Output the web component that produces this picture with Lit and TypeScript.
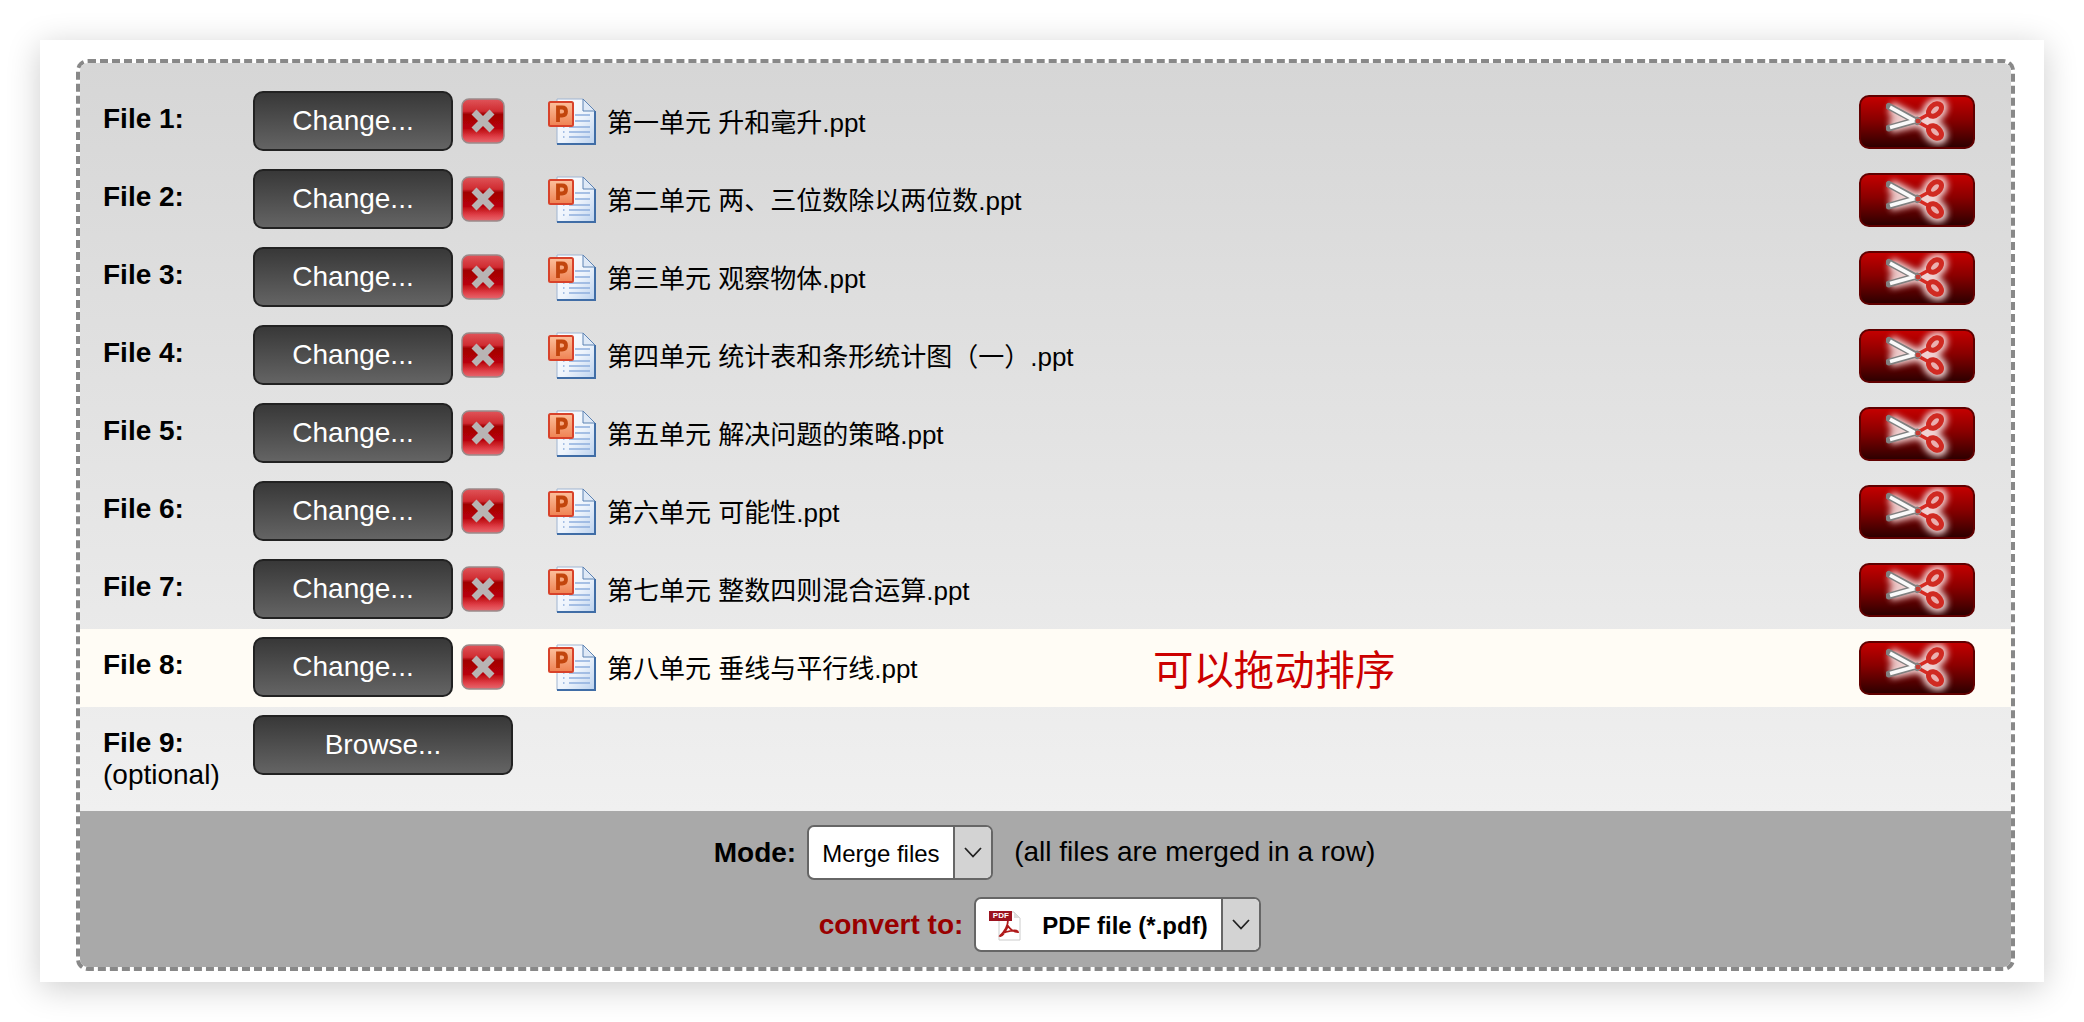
import { LitElement, html, css, svg } from "lit";
import { customElement } from "lit/decorators.js";

const pptIcon = () => svg`<svg class="ppt" width="48" height="47" viewBox="0 0 48 47">
  <defs>
    <linearGradient id="pg" x1="0" y1="0" x2="1" y2="1"><stop offset="0" stop-color="#fdfeff"/><stop offset=".55" stop-color="#eef4fc"/><stop offset="1" stop-color="#bcd2ee"/></linearGradient>
    <linearGradient id="po" x1="0" y1="0" x2="0" y2="1"><stop offset="0" stop-color="#fcc09c"/><stop offset="1" stop-color="#ef8252"/></linearGradient>
    <filter id="ps" x="-5%" y="-5%" width="110%" height="110%"><feGaussianBlur stdDeviation=".5"/></filter>
  </defs>
  <g filter="url(#ps)">
    <path d="M9 1H35L47 13V46H9Z" fill="url(#pg)" stroke="#9fb4d0" stroke-width="1"/>
    <path d="M47 13V46H9" fill="none" stroke="#3f6da6" stroke-width="2"/>
    <path d="M35 1V13H47Z" fill="#dfe9f6" stroke="#5d83b3" stroke-width="1"/>
    <g stroke="#8eaedd" stroke-width="1.4">
      <path d="M27 17H42M27 23H42"/><path d="M21 29H42M21 34H42M21 39H42"/>
      <path d="M15 29H18M15 34H18M15 39H18" stroke-dasharray="1.5 1.5"/>
    </g>
    <rect x="1" y="4" width="24" height="24" rx="1.5" fill="url(#po)" stroke="#d8432a" stroke-width="2"/>
    <path d="M10 24V9.500H14Q18 9.500 18 13.500T14 17.500H10" fill="none" stroke="#c2440c" stroke-width="3.800"/>
  </g>
</svg>`;

const xIcon = () => svg`<svg class="x" width="44" height="46" viewBox="0 0 44 46">
  <defs>
    <linearGradient id="xg" x1="0" y1="0" x2="0" y2="1">
      <stop offset="0" stop-color="#e0555a"/><stop offset=".28" stop-color="#cf2a30"/><stop offset=".34" stop-color="#a00004"/><stop offset=".66" stop-color="#b80208"/><stop offset=".86" stop-color="#e04048"/><stop offset="1" stop-color="#e66a70"/>
    </linearGradient>
    <filter id="xs" x="-10%" y="-10%" width="120%" height="120%"><feGaussianBlur stdDeviation=".6"/></filter>
  </defs>
  <g filter="url(#xs)">
    <rect x="1" y="1" width="42" height="44" rx="7" fill="url(#xg)" stroke="#9a8a8a" stroke-width="1.500"/>
    <path d="M13 14L31 32M31 14L13 32" stroke="#b8b4b4" stroke-width="7"/>
  </g>
</svg>`;

const scissors = () => svg`<svg class="sc" width="112" height="50" viewBox="0 0 112 50">
  <defs>
    <filter id="sg" x="-40%" y="-40%" width="180%" height="180%"><feGaussianBlur stdDeviation="3.400"/></filter>
    <filter id="ss" x="-5%" y="-5%" width="110%" height="110%"><feGaussianBlur stdDeviation=".55"/></filter>
  </defs>
  <g filter="url(#sg)" opacity=".95" fill="none" stroke="#f6dede" stroke-width="12">
    <path d="M29 10L56 24L29 30" fill="#f6dede" fill-opacity=".75"/>
    <ellipse cx="74" cy="13" rx="8" ry="5" transform="rotate(-42 74 13)" fill="#f6dede"/>
    <ellipse cx="74" cy="35" rx="8" ry="5" transform="rotate(42 74 35)" fill="#f6dede"/>
    <path d="M56 24L68 18M56 24L68 30"/>
  </g>
  <g filter="url(#ss)">
    <path d="M28 9.500L56 24.500" stroke="#808080" stroke-width="7" stroke-linecap="round"/>
    <path d="M28 31L56 23" stroke="#808080" stroke-width="7" stroke-linecap="round"/>
    <path d="M29 10.200L54 23.800" stroke="#fafafa" stroke-width="3.600"/>
    <path d="M29 30.600L54 23.500" stroke="#fafafa" stroke-width="3.600"/>
    <path d="M57 23L68 17M57 25L68 31" stroke="#d62a22" stroke-width="3.500"/>
    <ellipse cx="74" cy="13" rx="7.500" ry="5" transform="rotate(-42 74 13)" fill="#eab0b0" stroke="#d02a22" stroke-width="5"/>
    <ellipse cx="74" cy="35" rx="7.500" ry="5" transform="rotate(42 74 35)" fill="#eab0b0" stroke="#d02a22" stroke-width="5"/>
    <circle cx="57" cy="24" r="3" fill="#c93a32" stroke="#888" stroke-width="1"/>
  </g>
</svg>`;

const chevron = () => svg`<svg width="18" height="11" viewBox="0 0 18 11"><path d="M1 1L9 9.500L17 1" fill="none" stroke="#222" stroke-width="1.800"/></svg>`;

const pdfIcon = () => svg`<svg class="pdf" width="32" height="30" viewBox="0 0 32 30">
  <path d="M10 1H25L31 7V29H10Z" fill="#fff" stroke="#ccc" stroke-width="1"/>
  <path d="M25 1V7H31Z" fill="#ddd"/>
  <path d="M19 9C19 15 15 21 11 25C13 26 16 21 19 15C21 18 25 21 29 21C29 19 24 19 17 21C15 21.500 12 23 11 25" fill="none" stroke="#b01a1a" stroke-width="1.800"/>
</svg>`;

const files = [
  "第一单元 升和毫升.ppt",
  "第二单元 两、三位数除以两位数.ppt",
  "第三单元 观察物体.ppt",
  "第四单元 统计表和条形统计图（一）.ppt",
  "第五单元 解决问题的策略.ppt",
  "第六单元 可能性.ppt",
  "第七单元 整数四则混合运算.ppt",
  "第八单元 垂线与平行线.ppt",
];

@customElement("app-root")
export class AppRoot extends LitElement {
  static styles = css`
    :host {
      display: block;
      padding: 40px;
      background: #fff;
      font-family: "Liberation Sans", "Noto Sans CJK SC", sans-serif;
      font-size: 28px;
      color: #000;
    }
    .card {
      width: 2004px;
      box-sizing: border-box;
      background: #fff;
      padding: 19px 29px 11px 36px;
      box-shadow: 0 6px 32px rgba(0, 0, 0, 0.2);
    }
    .box {
      border: 4px dashed #888;
      border-radius: 12px;
      background-clip: padding-box;
      overflow: hidden;
    }
    .list {
      padding-top: 20px;
      background: linear-gradient(#d6d6d6, #f0f0f0);
    }
    .row {
      display: flex;
      align-items: flex-start;
      height: 78px;
      padding-left: 23px;
    }
    .row.active { background: #fffcf5; }
    .row.last { height: 104px; }
    .label {
      width: 150px;
      flex: none;
      padding-top: 20px;
      line-height: 32px;
    }
    .label b { display: block; }
    .btn {
      box-sizing: border-box;
      width: 200px;
      height: 60px;
      margin: 8px 0 0;
      padding: 0;
      flex: none;
      border: 2px solid #222;
      border-radius: 10px;
      background: linear-gradient(#383838, #646464);
      color: #fff;
      font: inherit;
    }
    .btn.wide { width: 260px; }
    .x { flex: none; margin: 15px 0 0 8px; }
    .ppt { flex: none; margin: 15px 0 0 43px; }
    .name {
      flex: none;
      width: 546px;
      margin-left: 11px;
      padding-top: 25px;
      font-size: 26px;
      line-height: 30px;
      white-space: nowrap;
    }
    .hint {
      flex: none;
      padding-top: 18px;
      font-size: 40.4px;
      line-height: 48px;
      color: #cc0000;
    }
    .cut {
      box-sizing: border-box;
      width: 116px;
      height: 54px;
      margin: 12px 36px 0 auto;
      padding: 0;
      flex: none;
      display: flex;
      border: 2px solid #600000;
      border-radius: 10px;
      background: linear-gradient(#c40000 0%, #8a0000 45%, #2e0000 100%);
    }
    .foot {
      height: 156px;
      box-sizing: border-box;
      padding-top: 14px;
      display: flex;
      flex-direction: column;
      align-items: center;
      gap: 17px;
      background: #a9a9a9;
    }
    .line {
      display: flex;
      align-items: center;
      height: 55px;
    }
    .line.mode { padding-right: 2px; }
    .line.convert { padding-right: 11px; }
    .sel {
      display: flex;
      box-sizing: border-box;
      height: 55px;
      margin-left: 11px;
      border: 2px solid #666;
      border-radius: 7px;
      overflow: hidden;
      background: #fff;
    }
    .val {
      display: flex;
      align-items: center;
      font-size: 24px;
      box-sizing: border-box;
    }
    .mode .val { width: 144px; padding: 3px 0 0 13px; }
    .convert .val { width: 245px; padding: 2px 0 0 13px; font-weight: bold; }
    .pdf-wrap { position: relative; width: 39px; height: 30px; margin-right: 14px; }
    .pdf { position: absolute; left: 0; top: 0; }
    .tag {
      position: absolute;
      left: 0;
      top: 0;
      width: 23px;
      height: 10px;
      background: #9c1420;
      color: #fff;
      font-size: 8px;
      line-height: 10px;
      text-align: center;
    }
    .arrow {
      width: 36px;
      display: flex;
      align-items: center;
      justify-content: center;
      background: #d3d3d3;
      border-left: 2px solid #666;
    }
    .note { margin-left: 21px; padding-bottom: 2px; }
    .red { color: #990000; }
  `;

  render() {
    return html`<div class="card"><div class="box">
      <div class="list">
        ${files.map(
          (f, i) => html`<div class="row ${i === 7 ? "active" : ""}">
            <div class="label"><b>File ${i + 1}:</b></div>
            <button class="btn">Change...</button>
            ${xIcon()} ${pptIcon()}
            <div class="name">${f}</div>
            ${i === 7 ? html`<div class="hint">可以拖动排序</div>` : ""}
            <button class="cut">${scissors()}</button>
          </div>`
        )}
        <div class="row last">
          <div class="label"><b>File 9:</b>(optional)</div>
          <button class="btn wide">Browse...</button>
        </div>
      </div>
      <div class="foot">
        <div class="line mode">
          <b>Mode:</b>
          <div class="sel"><div class="val">Merge files</div><div class="arrow">${chevron()}</div></div>
          <span class="note">(all files are merged in a row)</span>
        </div>
        <div class="line convert">
          <b class="red">convert to:</b>
          <div class="sel">
            <div class="val"><span class="pdf-wrap">${pdfIcon()}<span class="tag">PDF</span></span>PDF file (*.pdf)</div>
            <div class="arrow">${chevron()}</div>
          </div>
        </div>
      </div>
    </div></div>`;
  }
}
